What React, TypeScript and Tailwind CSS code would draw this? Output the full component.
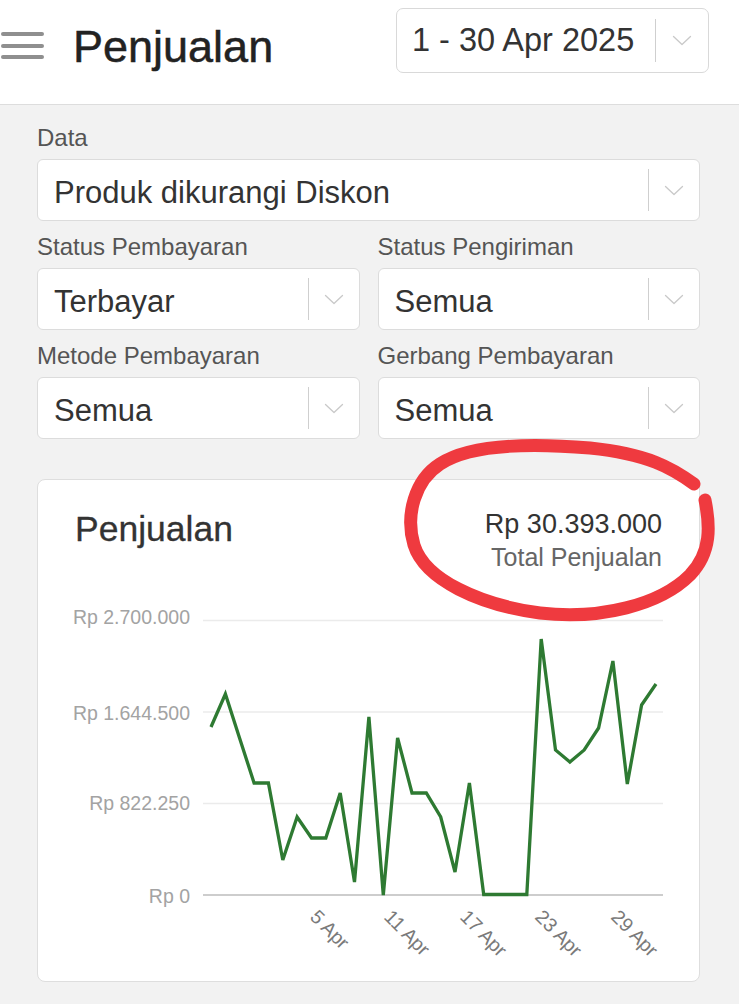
import React from 'react';

const FONT = '"Liberation Sans", Arial, Helvetica, sans-serif';

// daily totals, already in chart pixel space (page coordinates)
const points = [
  727, 694, 738.5, 783, 783, 860, 817, 838, 838, 793, 882, 717, 895, 738, 793, 793,
  817, 872, 783, 894.5, 894.5, 894.5, 894.5, 639, 750, 762, 750, 728, 661, 784, 705, 684,
];

const gridLines = [
  { y: 620.5, label: 'Rp 2.700.000', ly: 617 },
  { y: 712, label: 'Rp 1.644.500', ly: 712.7 },
  { y: 803.5, label: 'Rp 822.250', ly: 802.7 },
  { y: 895, label: 'Rp 0', ly: 896 },
];

const xTicks = [
  { x: 309, label: '5 Apr' },
  { x: 383, label: '11 Apr' },
  { x: 459, label: '17 Apr' },
  { x: 534, label: '23 Apr' },
  { x: 610, label: '29 Apr' },
];

function Chevron() {
  return (
    <svg width="20" height="11" viewBox="0 0 20 11" fill="none">
      <path d="M1.5 1.5 L10 9.5 L18.5 1.5" stroke="#c9c9c9" strokeWidth="1.3" strokeLinecap="round" strokeLinejoin="round" />
    </svg>
  );
}

function Select({ value }: { value: string }) {
  return (
    <div className="flex h-[62px] items-center rounded-[6px] border border-[#dcdcdc] bg-white">
      <span className="flex-1 pl-[16px] pt-1 text-[31px] leading-none text-[#333]">{value}</span>
      <span className="h-[42px] w-px bg-[#cfcfcf]" />
      <span className="flex w-[50px] items-center justify-center">
        <Chevron />
      </span>
    </div>
  );
}

function Field({ label, value }: { label: string; value: string }) {
  return (
    <div className="flex flex-col">
      <span className="mb-[8px] text-[24px] leading-[26px] text-[#555]">{label}</span>
      <Select value={value} />
    </div>
  );
}

function SalesChart() {
  const step = 445 / 31;
  const d = points.map((y, i) => `${i === 0 ? 'M' : 'L'}${(211 + i * step).toFixed(1)} ${y}`).join(' ');
  return (
    <svg width="661" height="409" viewBox="38 572 661 409" className="block" style={{ fontFamily: FONT }}>
      {gridLines.map((g, i) => (
        <g key={g.label}>
          <line x1="203" x2="663" y1={g.y} y2={g.y} stroke={i === 3 ? '#bdbdbd' : '#ebebeb'} strokeWidth="1.5" />
          <text x="190" y={g.ly + 7} textAnchor="end" fontSize="19.5" fill="#a3a3a3">
            {g.label}
          </text>
        </g>
      ))}
      <path d={d} fill="none" stroke="#2e7a32" strokeWidth="3.3" strokeLinejoin="miter" strokeMiterlimit="3" />
      {xTicks.map((t) => (
        <text key={t.label} transform={`translate(${t.x} 918) rotate(45)`} fontSize="19.5" fill="#7a7a7a">
          {t.label}
        </text>
      ))}
    </svg>
  );
}

export default function App() {
  return (
    <div className="relative min-h-screen w-[739px] bg-[#f2f2f2]" style={{ fontFamily: FONT }}>
      {/* Top bar */}
      <header className="flex h-[105px] items-start border-b border-[#dddddd] bg-white">
        <div className="ml-[1px] mt-[32px] flex w-[43px] flex-col gap-[7.7px]">
          <span className="h-[4px] rounded-full bg-[#8f8f8f]" />
          <span className="h-[4px] rounded-full bg-[#8f8f8f]" />
          <span className="h-[4px] rounded-full bg-[#8f8f8f]" />
        </div>
        <h1 className="ml-[29px] mt-[25px] text-[45px] leading-[44px] text-[#222] [-webkit-text-stroke:0.5px_#222]">
          Penjualan
        </h1>
        <div className="ml-auto mr-[30px] mt-[8px] flex h-[65px] w-[313px] items-center rounded-[7px] border border-[#d9d9d9] bg-white">
          <span className="flex-1 pl-[15px] text-[32.5px] leading-none text-[#333]">1 - 30 Apr 2025</span>
          <span className="h-[43px] w-px bg-[#cfcfcf]" />
          <span className="flex w-[52px] items-center justify-center">
            <Chevron />
          </span>
        </div>
      </header>

      {/* Filters */}
      <div className="pl-[37px] pr-[39px] pt-[20px]">
        <Field label="Data" value="Produk dikurangi Diskon" />
        <div className="mt-[13px] grid grid-cols-2 gap-x-[18px] gap-y-[13px]">
          <Field label="Status Pembayaran" value="Terbayar" />
          <Field label="Status Pengiriman" value="Semua" />
          <Field label="Metode Pembayaran" value="Semua" />
          <Field label="Gerbang Pembayaran" value="Semua" />
        </div>

        {/* Chart card */}
        <div className="mt-[40px] rounded-[8px] border border-[#dedede] bg-white pt-[28px]">
          <div className="flex items-start justify-between px-[37px]">
            <h2 className="mt-[1px] text-[35.5px] leading-[40px] text-[#333] [-webkit-text-stroke:0.3px_#333]">Penjualan</h2>
            <div className="flex flex-col items-end">
              <span className="text-[27px] leading-[32px] text-[#333]">Rp 30.393.000</span>
              <span className="mt-[2px] text-[25px] leading-[30px] text-[#666]">Total Penjualan</span>
            </div>
          </div>
          <SalesChart />
        </div>
      </div>

      {/* hand-drawn red circle around the total */}
      <svg className="pointer-events-none absolute left-0 top-0" width="739" height="1004" viewBox="0 0 739 1004">
        <path
          d="M694 484 C672 468 648 454 590 448 C530 443 470 444 440 464 C415 480 405 515 414 545 C425 580 480 605 540 613 C600 620 660 605 690 575 C712 552 710 525 705 500"
          fill="none"
          stroke="#ef3a3f"
          strokeWidth="13"
          strokeLinecap="round"
        />
      </svg>
    </div>
  );
}
